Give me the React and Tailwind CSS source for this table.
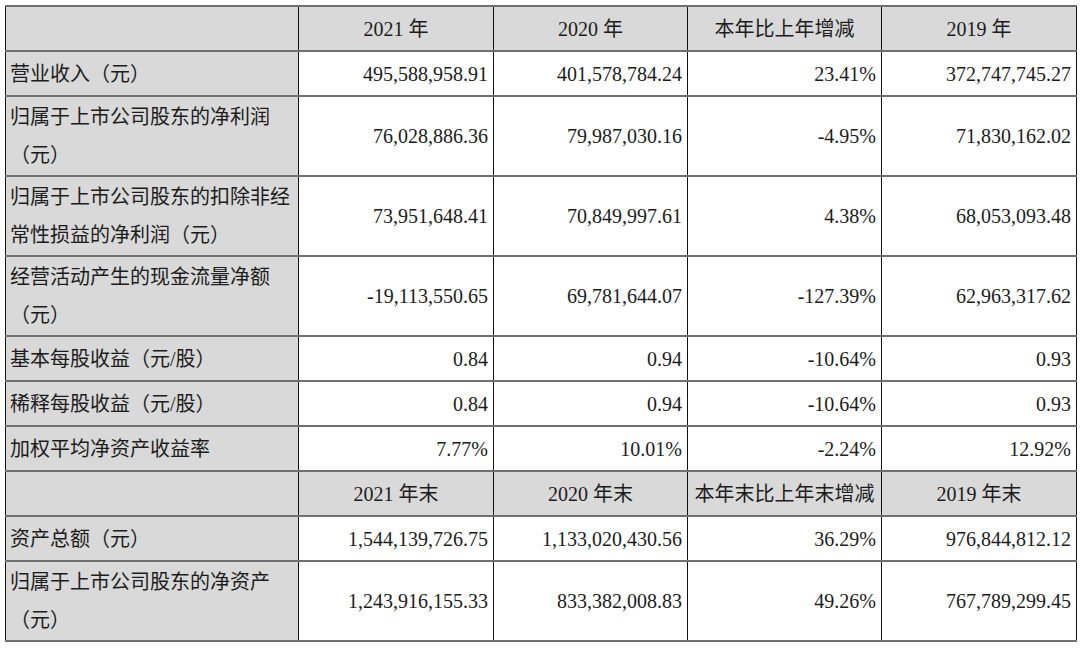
// App.jsx
const rows = [
  { label: ["营业收入（元）"], values: ["495,588,958.91", "401,578,784.24", "23.41%", "372,747,745.27"], tall: false },
  { label: ["归属于上市公司股东的净利润", "（元）"], values: ["76,028,886.36", "79,987,030.16", "-4.95%", "71,830,162.02"], tall: true },
  { label: ["归属于上市公司股东的扣除非经", "常性损益的净利润（元）"], values: ["73,951,648.41", "70,849,997.61", "4.38%", "68,053,093.48"], tall: true },
  { label: ["经营活动产生的现金流量净额", "（元）"], values: ["-19,113,550.65", "69,781,644.07", "-127.39%", "62,963,317.62"], tall: true },
  { label: ["基本每股收益（元/股）"], values: ["0.84", "0.94", "-10.64%", "0.93"], tall: false },
  { label: ["稀释每股收益（元/股）"], values: ["0.84", "0.94", "-10.64%", "0.93"], tall: false },
  { label: ["加权平均净资产收益率"], values: ["7.77%", "10.01%", "-2.24%", "12.92%"], tall: false },
];

const rows2 = [
  { label: ["资产总额（元）"], values: ["1,544,139,726.75", "1,133,020,430.56", "36.29%", "976,844,812.12"], tall: false },
  { label: ["归属于上市公司股东的净资产", "（元）"], values: ["1,243,916,155.33", "833,382,008.83", "49.26%", "767,789,299.45"], tall: true },
];

const cell = "border-x border-x-[#111] border-y-2 border-y-[#707070]";

function HeaderRow({ cols }) {
  return (
    <tr className="h-[45px] bg-[#d9d9d9]">
      <td className={cell}></td>
      {cols.map((c) => (
        <td key={c} className={`${cell} text-center align-middle`}>
          {c}
        </td>
      ))}
    </tr>
  );
}

function DataRow({ row }) {
  return (
    <tr className={row.tall ? "h-[80px]" : "h-[45px]"}>
      <td className={`${cell} bg-[#d9d9d9] pl-[4px] align-middle leading-[38px]`}>
        {row.label.map((l, i) => (
          <div key={i} className="whitespace-nowrap">
            {l}
          </div>
        ))}
      </td>
      {row.values.map((v, i) => (
        <td key={i} className={`${cell} text-right pr-[5px] align-middle`}>
          {v}
        </td>
      ))}
    </tr>
  );
}

export default function App() {
  return (
    <div
      className="w-[1080px] h-[648px] bg-white pt-[5px] pl-[5px] text-[#1c1c1c] text-[20px]"
      style={{ fontFamily: '"Liberation Serif", "Noto Sans CJK SC", serif' }}
    >
      <table className="table-fixed border-collapse w-[1071px]">
        <colgroup>
          <col className="w-[293px]" />
          <col className="w-[195px]" />
          <col className="w-[194px]" />
          <col className="w-[194px]" />
          <col className="w-[195px]" />
        </colgroup>
        <tbody>
          <HeaderRow cols={["2021 年", "2020 年", "本年比上年增减", "2019 年"]} />
          {rows.map((r, i) => (
            <DataRow key={i} row={r} />
          ))}
          <HeaderRow cols={["2021 年末", "2020 年末", "本年末比上年末增减", "2019 年末"]} />
          {rows2.map((r, i) => (
            <DataRow key={i} row={r} />
          ))}
        </tbody>
      </table>
    </div>
  );
}
